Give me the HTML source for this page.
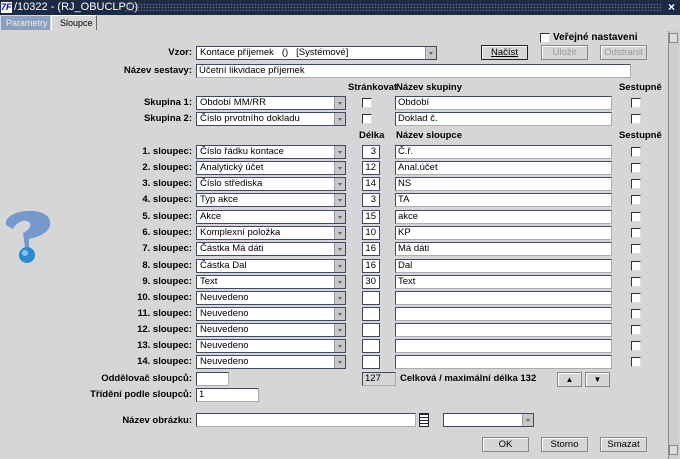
<!DOCTYPE html><html><head><meta charset="utf-8"><style>
*{box-sizing:border-box;margin:0;padding:0}
body{width:680px;height:459px;background:#d6d6d6;font-family:"Liberation Sans",Arial,sans-serif;font-size:9.5px;position:relative;overflow:hidden;color:#000}
.a{position:absolute}
.t{position:absolute;height:15px;top:0;left:0;width:680px;background:#1d2a45}
.lbl{position:absolute;font-weight:bold;text-align:right;width:190px;left:2px;line-height:14px}
.in{position:absolute;height:14px;background:#fff;border:1px solid #3c4a66;border-right-color:#aab;border-bottom-color:#aab;line-height:12px;padding-left:2px;white-space:nowrap;overflow:hidden}
.cb{position:absolute;height:14px;background:#fff;border:1px solid #3c4a66;line-height:12px;padding-left:3px;width:150px;left:196px}
.cb:after{content:"";position:absolute;right:0;top:0;width:10px;height:12px;background:#c8c8c8;border-left:1px solid #999}
.cb:before{content:"";position:absolute;right:3px;top:5px;border-left:2px solid transparent;border-right:2px solid transparent;border-top:3px solid #666;z-index:2}
.ck{position:absolute;width:10px;height:10px;background:#fff;border:1px solid #333;border-right-color:#ddd;border-bottom-color:#ddd}
.d{position:absolute;left:362px;width:18px;height:14px;background:#fff;border:1px solid #3c4a66;text-align:right;padding-right:3px;line-height:12px}
.n{left:395px;width:217px}
.btn{position:absolute;height:15px;border:1px solid #888;background:#d6d6d6;text-align:center;line-height:13px;box-shadow:inset 1px 1px #fff}
.h{position:absolute;font-weight:bold;line-height:12px}
</style></head><body>
<div class="t"><div class="a" style="left:1px;top:2px;width:11px;height:11px;background:#fff;color:#00a;font-size:9px;font-weight:bold;font-style:italic;line-height:11px">7F</div>
<div class="a" style="left:14px;top:1px;color:#fff;font-size:11px">/10322 - (RJ_OBUCLPO)</div>
<div class="a" style="left:125px;top:3px;width:538px;height:9px;background:radial-gradient(#667 35%,transparent 40%) 0 0/3px 3px"></div>
<div class="a" style="left:668px;top:0px;color:#fff;font-size:12px;font-weight:bold">×</div></div>
<div class="a" style="left:1px;top:16px;width:49px;height:14px;background:#8ca0bc;color:#e8eef8;line-height:14px;padding-left:5px;font-size:9px">Parametry</div>
<div class="a" style="left:51px;top:15px;width:46px;height:15px;background:#d6d6d6;border:1px solid #fff;border-right-color:#666;border-bottom:none;line-height:14px;padding-left:8px;font-size:9px">Sloupce</div>
<div class="a" style="left:668px;top:31px;width:11px;height:428px;background:#cfcfcf;border-left:1px solid #888"></div>
<div class="a" style="left:669px;top:33px;width:9px;height:10px;background:#ddd;border:1px solid #888"></div>
<div class="a" style="left:669px;top:445px;width:9px;height:10px;background:#ddd;border:1px solid #888"></div>
<div class="ck" style="left:540px;top:33px"></div><div class="h" style="left:553px;top:32px;font-size:10px">Veřejné nastaveni</div>
<div class="lbl" style="top:46px">Vzor:</div><div class="cb" style="top:46px;width:241px">Kontace příjemek &nbsp; () &nbsp; [Systémové]</div>
<div class="btn" style="left:481px;top:45px;width:47px;border:1px solid #222"><u>Načíst</u></div>
<div class="btn" style="left:541px;top:45px;width:47px;color:#999">Uložit</div>
<div class="btn" style="left:600px;top:45px;width:47px;color:#999">Odstranit</div>
<div class="lbl" style="top:64px">Název sestavy:</div><div class="in" style="left:196px;top:64px;width:435px">Účetní likvidace příjemek</div>
<div class="h" style="left:348px;top:82px">Stránkovat</div><div class="h" style="left:396px;top:82px">Název skupiny</div><div class="h" style="left:619px;top:82px">Sestupně</div>
<div class="lbl" style="top:96px">Skupina 1:</div><div class="cb" style="top:96px">Období MM/RR</div><div class="ck" style="left:362px;top:98px"></div><div class="in n" style="top:96px">Období</div><div class="ck" style="left:631px;top:98px"></div>
<div class="lbl" style="top:112px">Skupina 2:</div><div class="cb" style="top:112px">Číslo prvotního dokladu</div><div class="ck" style="left:362px;top:114px"></div><div class="in n" style="top:112px">Doklad č.</div><div class="ck" style="left:631px;top:114px"></div>
<div class="h" style="left:359px;top:130px">Délka</div><div class="h" style="left:396px;top:130px">Název sloupce</div><div class="h" style="left:619px;top:130px">Sestupně</div>
<div class="lbl" style="top:145px">1. sloupec:</div><div class="cb" style="top:145px">Číslo řádku kontace</div><div class="d" style="top:145px">3</div><div class="in n" style="top:145px">Č.ř.</div><div class="ck" style="left:631px;top:147px"></div>
<div class="lbl" style="top:161px">2. sloupec:</div><div class="cb" style="top:161px">Analytický účet</div><div class="d" style="top:161px">12</div><div class="in n" style="top:161px">Anal.účet</div><div class="ck" style="left:631px;top:163px"></div>
<div class="lbl" style="top:177px">3. sloupec:</div><div class="cb" style="top:177px">Číslo střediska</div><div class="d" style="top:177px">14</div><div class="in n" style="top:177px">NS</div><div class="ck" style="left:631px;top:179px"></div>
<div class="lbl" style="top:193px">4. sloupec:</div><div class="cb" style="top:193px">Typ akce</div><div class="d" style="top:193px">3</div><div class="in n" style="top:193px">TA</div><div class="ck" style="left:631px;top:195px"></div>
<div class="lbl" style="top:210px">5. sloupec:</div><div class="cb" style="top:210px">Akce</div><div class="d" style="top:210px">15</div><div class="in n" style="top:210px">akce</div><div class="ck" style="left:631px;top:212px"></div>
<div class="lbl" style="top:226px">6. sloupec:</div><div class="cb" style="top:226px">Komplexní položka</div><div class="d" style="top:226px">10</div><div class="in n" style="top:226px">KP</div><div class="ck" style="left:631px;top:228px"></div>
<div class="lbl" style="top:242px">7. sloupec:</div><div class="cb" style="top:242px">Částka Má dáti</div><div class="d" style="top:242px">16</div><div class="in n" style="top:242px">Má dáti</div><div class="ck" style="left:631px;top:244px"></div>
<div class="lbl" style="top:259px">8. sloupec:</div><div class="cb" style="top:259px">Částka Dal</div><div class="d" style="top:259px">16</div><div class="in n" style="top:259px">Dal</div><div class="ck" style="left:631px;top:261px"></div>
<div class="lbl" style="top:275px">9. sloupec:</div><div class="cb" style="top:275px">Text</div><div class="d" style="top:275px">30</div><div class="in n" style="top:275px">Text</div><div class="ck" style="left:631px;top:277px"></div>
<div class="lbl" style="top:291px">10. sloupec:</div><div class="cb" style="top:291px">Neuvedeno</div><div class="d" style="top:291px"></div><div class="in n" style="top:291px"></div><div class="ck" style="left:631px;top:293px"></div>
<div class="lbl" style="top:307px">11. sloupec:</div><div class="cb" style="top:307px">Neuvedeno</div><div class="d" style="top:307px"></div><div class="in n" style="top:307px"></div><div class="ck" style="left:631px;top:309px"></div>
<div class="lbl" style="top:323px">12. sloupec:</div><div class="cb" style="top:323px">Neuvedeno</div><div class="d" style="top:323px"></div><div class="in n" style="top:323px"></div><div class="ck" style="left:631px;top:325px"></div>
<div class="lbl" style="top:339px">13. sloupec:</div><div class="cb" style="top:339px">Neuvedeno</div><div class="d" style="top:339px"></div><div class="in n" style="top:339px"></div><div class="ck" style="left:631px;top:341px"></div>
<div class="lbl" style="top:355px">14. sloupec:</div><div class="cb" style="top:355px">Neuvedeno</div><div class="d" style="top:355px"></div><div class="in n" style="top:355px"></div><div class="ck" style="left:631px;top:357px"></div>
<div class="lbl" style="top:372px">Oddělovač sloupců:</div><div class="in" style="left:196px;top:372px;width:33px"></div>
<div class="in" style="left:362px;top:372px;width:34px;background:#d6d6d6">127</div>
<div class="h" style="left:400px;top:373px">Celková / maximální délka 132</div>
<div class="btn" style="left:557px;top:372px;width:25px;font-size:8px">▲</div><div class="btn" style="left:585px;top:372px;width:25px;font-size:8px">▼</div>
<div class="lbl" style="top:388px">Třídění podle sloupců:</div><div class="in" style="left:196px;top:388px;width:63px">1</div>
<div class="lbl" style="top:414px">Název obrázku:</div><div class="in" style="left:196px;top:413px;width:220px"></div>
<div class="a" style="left:419px;top:413px;width:10px;height:14px;background:repeating-linear-gradient(#223 0 1px,#fff 1px 3px);border:1px solid #223"></div>
<div class="cb" style="left:443px;top:413px;width:91px"></div>
<div class="btn" style="left:482px;top:437px;width:47px">OK</div>
<div class="btn" style="left:541px;top:437px;width:47px">Storno</div>
<div class="btn" style="left:600px;top:437px;width:47px">Smazat</div>
<svg class="a" style="left:3px;top:203px" width="48" height="62"><path d="M3 22 C0 6 44 2 47 18 C49 30 34 34 26 36 L26 44 L22 44 L20 30 C28 26 30 20 24 18 C18 16 12 22 10 26 Z" fill="#6a92cc" opacity=".9"/><circle cx="24" cy="52" r="8" fill="#2a8ad0"/><circle cx="22" cy="50" r="3" fill="#7cc8f0"/></svg>
</body></html>
